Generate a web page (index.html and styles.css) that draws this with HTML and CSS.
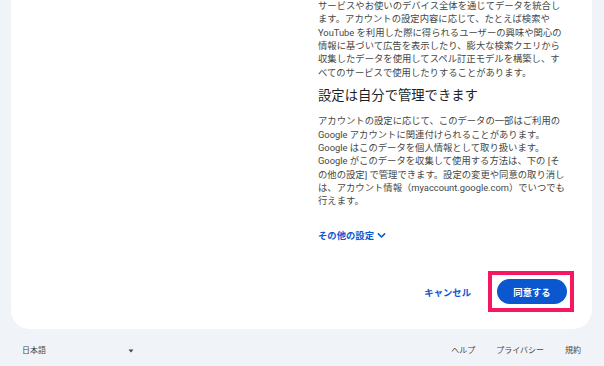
FILE: index.html
```html
<!DOCTYPE html>
<html lang="ja">
<head>
<meta charset="utf-8">
<title>同意</title>
<link rel="stylesheet" href="styles.css">
</head>
<body>
<main class="card">
  <div class="column">
    <p class="text">サービスやお使いのデバイス全体を通じてデータを統合します。アカウントの設定内容に応じて、たとえば検索や YouTube を利用した際に得られるユーザーの興味や関心の情報に基づいて広告を表示したり、膨大な検索クエリから収集したデータを使用してスペル訂正モデルを構築し、すべてのサービスで使用したりすることがあります。</p>
    <h2 class="heading">設定は自分で管理できます</h2>
    <p class="text">アカウントの設定に応じて、このデータの一部はご利用の Google アカウントに関連付けられることがあります。Google はこのデータを個人情報として取り扱います。Google がこのデータを収集して使用する方法は、下の [その他の設定] で管理できます。設定の変更や同意の取り消しは、アカウント情報（myaccount.google.com）でいつでも行えます。</p>
    <button class="more" type="button">その他の設定<svg class="chev" viewBox="0 0 10 10" width="9" height="9"><path d="M1.5 3.2 L5 6.7 L8.5 3.2" fill="none" stroke="#0b57d0" stroke-width="1.7" stroke-linecap="round" stroke-linejoin="round"/></svg></button>
    <div class="actions">
      <button class="cancel" type="button">キャンセル</button>
      <div class="highlight">
        <button class="agree" type="button">同意する</button>
      </div>
    </div>
  </div>
</main>
<footer class="footer">
  <div class="lang">
    <span>日本語</span>
    <svg class="caret" viewBox="0 0 6 4" width="6" height="4"><path d="M0.5 0.5 L5.5 0.5 L3 3.5 Z" fill="#444746"/></svg>
  </div>
  <nav class="links">
    <a href="#">ヘルプ</a>
    <a href="#">プライバシー</a>
    <a href="#">規約</a>
  </nav>
</footer>
</body>
</html>
```

FILE: styles.css
```css
html, body {
  margin: 0;
  padding: 0;
}
body {
  background: #f0f4f9;
  font-family: Roboto, "Noto Sans CJK JP", sans-serif;
  color: #1f1f1f;
  width: 604px;
  height: 366px;
  overflow: hidden;
}
.card {
  background: #ffffff;
  margin: -1px 12px 0 11px;
  border-radius: 0 0 19px 19px;
  padding: 0 18px 17px 307px;
}
.column {
  display: flex;
  flex-direction: column;
}
.text {
  margin: 0;
  max-width: 248px;
  font-size: 9.33px;
  line-height: 13.33px;
  color: #444746;
}
.heading {
  margin: 8px 0 10px 0;
  font-size: 13.33px;
  line-height: 17.5px;
  font-weight: 400;
  color: #1f1f1f;
}
.more {
  align-self: flex-start;
  display: flex;
  align-items: center;
  gap: 3px;
  margin: 21px 0 0 0;
  padding: 0;
  border: 0;
  background: none;
  font-family: inherit;
  font-size: 9.33px;
  line-height: 13.33px;
  font-weight: 700;
  color: #0b57d0;
}
.actions {
  display: flex;
  justify-content: flex-end;
  align-items: center;
  gap: 17px;
  margin-top: 29px;
}
.cancel {
  border: 0;
  background: none;
  padding: 0;
  font-family: inherit;
  font-size: 9.33px;
  font-weight: 700;
  color: #0b57d0;
}
.highlight {
  border: 4px solid #f5175f;
  padding: 4px 3px 4px 5px;
  display: flex;
}
.agree {
  width: 70px;
  height: 25px;
  border: 0;
  border-radius: 13px;
  background: #0b57d0;
  color: #ffffff;
  font-family: inherit;
  font-size: 9.33px;
  font-weight: 700;
  padding: 0;
}
.footer {
  display: flex;
  justify-content: space-between;
  align-items: center;
  padding: 16px 23px 0 22px;
  font-size: 8px;
  line-height: 12px;
  color: #444746;
}
.lang {
  display: flex;
  align-items: center;
  justify-content: space-between;
  width: 112px;
}
.links {
  display: flex;
  gap: 21px;
}
.links a {
  color: #444746;
  text-decoration: none;
}
```
